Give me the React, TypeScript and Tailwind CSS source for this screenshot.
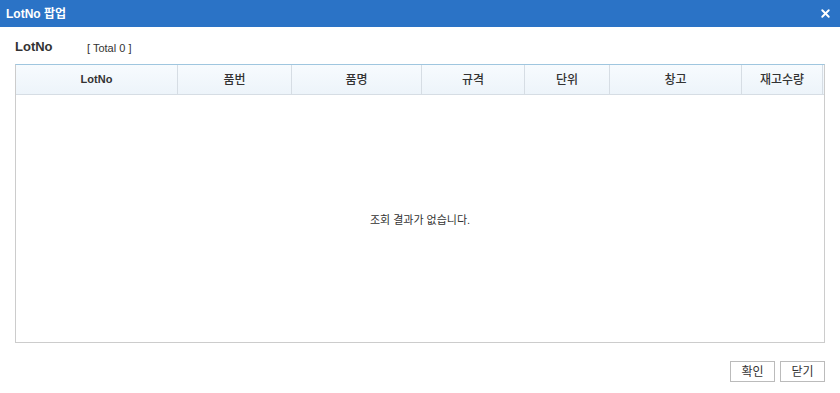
import { X } from 'lucide-react'

const cols = [
  { label: 'LotNo', w: 'w-[162px]', bold: true },
  { label: '품번', w: 'w-[114px]' },
  { label: '품명', w: 'w-[130px]' },
  { label: '규격', w: 'w-[103px]' },
  { label: '단위', w: 'w-[85px]' },
  { label: '창고', w: 'w-[132px]' },
  { label: '재고수량', w: 'w-[81px]' },
]

export default function App() {
  return (
    <div className="w-[840px] h-[393px] bg-white font-['Liberation_Sans','Noto_Sans_CJK_KR',sans-serif] text-[#333] overflow-hidden">
      {/* title bar */}
      <div className="h-[27px] bg-[#2b73c6] flex items-center justify-between pl-[6px] pr-[8px]">
        <span className="text-white text-[12px] font-bold">LotNo 팝업</span>
        <X size={13} strokeWidth={3.5} className="text-white" />
      </div>

      <div className="px-[15px]">
        <div className="h-[37px] flex items-end pb-[8px]">
          <span className="text-[13px] font-bold text-[#333] w-[72px]">LotNo</span>
          <span className="text-[11px] text-[#333]">[ Total 0 ]</span>
        </div>

        <div className="border border-[#ccc] border-t-[#9fc6df] h-[279px] flex flex-col">
          <div className="flex h-[30px] bg-gradient-to-b from-[#f7fbfe] to-[#edf4fa] border-b border-[#d6dde4]">
            {cols.map((c) => (
              <div
                key={c.label}
                className={`${c.w} shrink-0 flex items-center justify-center text-[#333] border-r border-[#d6dde4] ${c.bold ? 'text-[11px] font-bold' : 'text-[12px] font-medium'}`}
              >
                {c.label}
              </div>
            ))}
          </div>
          <div className="flex-1 flex items-center justify-center text-[11px] text-[#333] pt-[3px]">
            조회 결과가 없습니다.
          </div>
        </div>

        <div className="flex justify-end gap-[5px] mt-[18px]">
          <button className="w-[45px] h-[21px] border border-[#bbb] bg-white text-[12px] text-[#333] flex items-center justify-center">확인</button>
          <button className="w-[45px] h-[21px] border border-[#bbb] bg-white text-[12px] text-[#333] flex items-center justify-center">닫기</button>
        </div>
      </div>
    </div>
  )
}
